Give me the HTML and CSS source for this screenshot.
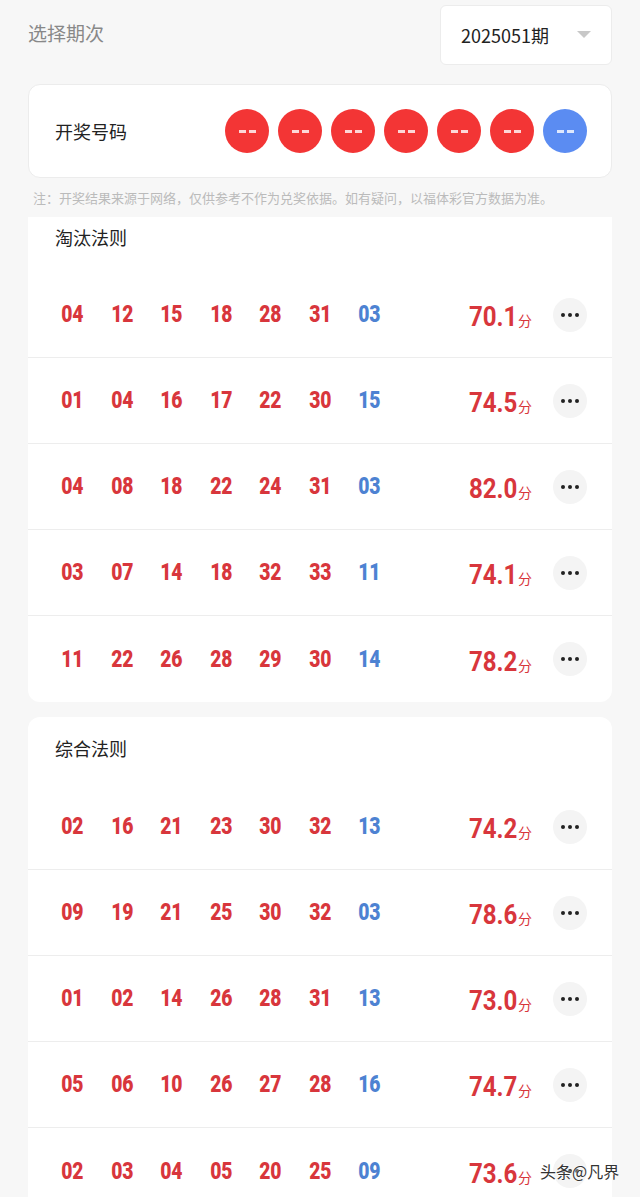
FILE: index.html
```html
<!DOCTYPE html>
<html>
    <head>
        <title>选择期次</title>
        <meta charset="utf-8">
        <link rel="stylesheet" href="styles.css">
    </head>
<body>
    <div class="page">
        <div class="header">
            <span class="header-label">选择期次</span>
            <div class="select">
                <span>2025051期</span>
                <i class="caret"></i>
            </div>
        </div>

        <div class="draw-card">
            <span class="draw-label">开奖号码</span>
            <div class="balls">
                <span class="ball red"><i></i><i></i></span>
                <span class="ball red"><i></i><i></i></span>
                <span class="ball red"><i></i><i></i></span>
                <span class="ball red"><i></i><i></i></span>
                <span class="ball red"><i></i><i></i></span>
                <span class="ball red"><i></i><i></i></span>
                <span class="ball blue"><i></i><i></i></span>
            </div>
        </div>

        <p class="note">注：开奖结果来源于网络，仅供参考不作为兑奖依据。如有疑问，以福体彩官方数据为准。</p>

        <div class="card card-first">
            <div class="card-title">淘汰法则</div>
            <div class="rows" id="rows1"></div>
        </div>

        <div class="card">
            <div class="card-title">综合法则</div>
            <div class="rows" id="rows2"></div>
        </div>
    </div>

    <div class="watermark">头条@凡界</div>

    <script>
        // rows: six red numbers, one blue number, score
        var group1 = [
            ["04", "12", "15", "18", "28", "31", "03", "70.1"],
            ["01", "04", "16", "17", "22", "30", "15", "74.5"],
            ["04", "08", "18", "22", "24", "31", "03", "82.0"],
            ["03", "07", "14", "18", "32", "33", "11", "74.1"],
            ["11", "22", "26", "28", "29", "30", "14", "78.2"]
        ];
        var group2 = [
            ["02", "16", "21", "23", "30", "32", "13", "74.2"],
            ["09", "19", "21", "25", "30", "32", "03", "78.6"],
            ["01", "02", "14", "26", "28", "31", "13", "73.0"],
            ["05", "06", "10", "26", "27", "28", "16", "74.7"],
            ["02", "03", "04", "05", "20", "25", "09", "73.6"]
        ];

        function fillRows(id, data) {
            var box = document.getElementById(id);
            data.forEach(function (item) {
                var row = document.createElement("div");
                row.className = "row";
                var nums = document.createElement("div");
                nums.className = "nums";
                for (var i = 0; i < 7; i++) {
                    var n = document.createElement("span");
                    n.className = i < 6 ? "num red" : "num blue";
                    n.innerHTML = "<b>" + item[i] + "</b>";
                    nums.appendChild(n);
                }
                row.appendChild(nums);

                var score = document.createElement("div");
                score.className = "score";
                score.innerHTML = "<b>" + item[7] + "</b><small>分</small>";
                row.appendChild(score);

                var more = document.createElement("div");
                more.className = "more";
                more.innerHTML = "<i></i><i></i><i></i>";
                row.appendChild(more);

                box.appendChild(row);
            });
        }

        fillRows("rows1", group1);
        fillRows("rows2", group2);
    </script>
</body>
</html>
```

FILE: styles.css
```css
body {
  margin: 0;
  background-color: #f7f7f7;
  font-family: "Noto Sans CJK SC", "Noto Sans", sans-serif;
  color: #222;
  position: relative;
}

.page {
  padding: 0 28px;
}

.header {
  display: flex;
  justify-content: space-between;
  align-items: center;
  height: 66px;
}

.header-label {
  font-size: 19px;
  color: #888;
  margin-top: -2px;
}

.select {
  box-sizing: border-box;
  width: 172px;
  height: 60px;
  margin-top: 3px;
  display: flex;
  align-items: center;
  justify-content: space-between;
  padding: 0 20px 0 20px;
  background-color: #fff;
  border: 1px solid #ececec;
  border-radius: 6px;
  font-size: 18px;
  color: #222;
}

.caret {
  width: 0;
  height: 0;
  border-left: 7px solid transparent;
  border-right: 7px solid transparent;
  border-top: 7px solid #c8c8c8;
}

.draw-card {
  box-sizing: border-box;
  height: 94px;
  margin-top: 18px;
  display: flex;
  align-items: center;
  justify-content: space-between;
  padding: 0 24px 0 26px;
  background-color: #fff;
  border: 1px solid #ececec;
  border-radius: 12px;
}

.draw-label {
  font-size: 18px;
}

.balls {
  display: flex;
  gap: 9px;
}

.ball {
  width: 44px;
  height: 44px;
  border-radius: 50%;
  display: flex;
  align-items: center;
  justify-content: center;
  gap: 3px;
}

.ball i {
  width: 7px;
  height: 3px;
  background-color: #fff;
  opacity: 0.8;
}

.ball.red {
  background-color: #f33535;
}

.ball.blue {
  background-color: #5b8cf2;
}

.note {
  margin: 0;
  padding: 12px 0 0 5px;
  height: 27px;
  font-size: 13px;
  color: #bbb;
  line-height: 16px;
  white-space: nowrap;
}

.card {
  background-color: #fff;
  border-radius: 12px;
  margin-bottom: 15px;
}

.card-title {
  font-size: 18px;
  line-height: 24px;
  padding: 19px 27px 24px;
}

.card-first {
  border-radius: 0 0 12px 12px;
}

.card-first .card-title {
  padding-top: 8px;
  padding-bottom: 23px;
}

.row {
  box-sizing: border-box;
  display: flex;
  align-items: center;
  height: 86px;
  padding: 0 25px 0 20px;
  border-bottom: 1px solid #ededed;
}

.row:last-child {
  border-bottom: none;
}

.nums {
  display: grid;
  grid-template-columns: repeat(7, 49.5px);
}

.num {
  text-align: center;
  font-family: Roboto, sans-serif;
  font-weight: bold;
  font-size: 23px;
}

.num b {
  display: inline-block;
  transform: scaleX(0.84);
}

.num.red {
  color: #d8363c;
}

.num.blue {
  color: #4d82d2;
}

.score {
  flex: 1;
  text-align: right;
  color: #d8363c;
  margin-right: 21px;
  margin-top: 4px;
  white-space: nowrap;
}

.score b {
  display: inline-block;
  font-family: Roboto, sans-serif;
  font-weight: bold;
  font-size: 28px;
  transform: scaleX(0.86);
  transform-origin: right center;
  margin-left: -8px;
}

.score small {
  font-family: "Noto Sans CJK SC", sans-serif;
  font-size: 14px;
  margin-left: 1px;
}

.more {
  width: 34px;
  height: 34px;
  border-radius: 50%;
  background-color: #f4f4f4;
  display: flex;
  align-items: center;
  justify-content: center;
  gap: 3px;
}

.more i {
  width: 4px;
  height: 4px;
  border-radius: 50%;
  background-color: #222;
}

.watermark {
  position: absolute;
  top: 1159px;
  left: 540px;
  font-size: 16px;
  color: #333;
  text-shadow: 0 0 2px #fff, 0 0 2px #fff;
}
```
